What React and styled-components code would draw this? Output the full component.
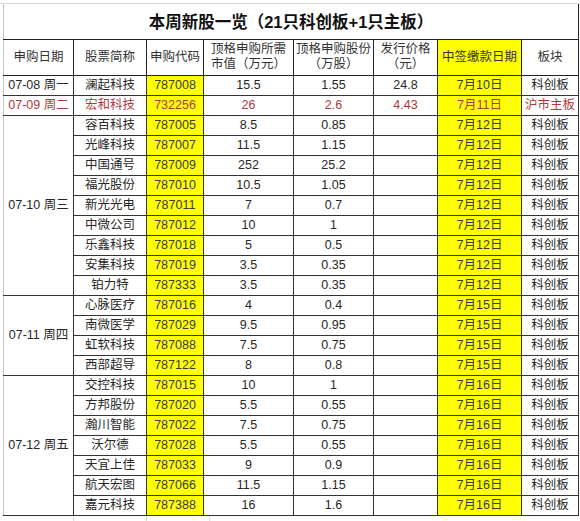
import React from 'react';
import styled, { createGlobalStyle } from 'styled-components';

const GlobalStyle = createGlobalStyle`
  html, body {
    margin: 0;
    padding: 0;
    background: #fff;
  }
  body {
    font-family: "Liberation Sans", "Noto Sans CJK SC", sans-serif;
    color: #262626;
  }
`;

const columns = [70, 73, 57, 90, 80, 64, 84, 57];

const groups = [
  {
    date: '07-08 周一',
    rows: [['澜起科技', '787008', '15.5', '1.55', '24.8', '7月10日', '科创板']],
  },
  {
    date: '07-09 周二',
    red: true,
    rows: [['宏和科技', '732256', '26', '2.6', '4.43', '7月11日', '沪市主板']],
  },
  {
    date: '07-10 周三',
    rows: [
      ['容百科技', '787005', '8.5', '0.85', '', '7月12日', '科创板'],
      ['光峰科技', '787007', '11.5', '1.15', '', '7月12日', '科创板'],
      ['中国通号', '787009', '252', '25.2', '', '7月12日', '科创板'],
      ['福光股份', '787010', '10.5', '1.05', '', '7月12日', '科创板'],
      ['新光光电', '787011', '7', '0.7', '', '7月12日', '科创板'],
      ['中微公司', '787012', '10', '1', '', '7月12日', '科创板'],
      ['乐鑫科技', '787018', '5', '0.5', '', '7月12日', '科创板'],
      ['安集科技', '787019', '3.5', '0.35', '', '7月12日', '科创板'],
      ['铂力特', '787333', '3.5', '0.35', '', '7月12日', '科创板'],
    ],
  },
  {
    date: '07-11 周四',
    rows: [
      ['心脉医疗', '787016', '4', '0.4', '', '7月15日', '科创板'],
      ['南微医学', '787029', '9.5', '0.95', '', '7月15日', '科创板'],
      ['虹软科技', '787088', '7.5', '0.75', '', '7月15日', '科创板'],
      ['西部超导', '787122', '8', '0.8', '', '7月15日', '科创板'],
    ],
  },
  {
    date: '07-12 周五',
    rows: [
      ['交控科技', '787015', '10', '1', '', '7月16日', '科创板'],
      ['方邦股份', '787020', '5.5', '0.55', '', '7月16日', '科创板'],
      ['瀚川智能', '787022', '7.5', '0.75', '', '7月16日', '科创板'],
      ['沃尔德', '787028', '5.5', '0.55', '', '7月16日', '科创板'],
      ['天宜上佳', '787033', '9', '0.9', '', '7月16日', '科创板'],
      ['航天宏图', '787066', '11.5', '1.15', '', '7月16日', '科创板'],
      ['嘉元科技', '787388', '16', '1.6', '', '7月16日', '科创板'],
    ],
  },
];

// yellow columns: 申购代码(1), 中签缴款日期(5)
const yellowCols = [1, 5];

const Sheet = () => (
  <Page>
    <GlobalStyle />
    <Table>
      <colgroup>
        {columns.map((w, i) => (
          <col key={i} style={{ width: w }} />
        ))}
      </colgroup>
      <tbody>
        <TitleRow>
          <TitleCell colSpan={8}>本周新股一览（21只科创板+1只主板）</TitleCell>
        </TitleRow>
        <HeadRow>
          <HeadCell>申购日期</HeadCell>
          <HeadCell>股票简称</HeadCell>
          <HeadCell>申购代码</HeadCell>
          <HeadCell>
            顶格申购所需
            <br />
            市值（万元）
          </HeadCell>
          <HeadCell>
            顶格申购股份
            <br />
            （万股）
          </HeadCell>
          <HeadCell>
            发行价格
            <br />
            （元）
          </HeadCell>
          <HeadCell $yellow>中签缴款日期</HeadCell>
          <HeadCell>板块</HeadCell>
        </HeadRow>
        {groups.map((g) =>
          g.rows.map((row, ri) => (
            <Row key={row[1]}>
              {ri === 0 && (
                <DateCell rowSpan={g.rows.length} $red={g.red}>
                  {g.date}
                </DateCell>
              )}
              {row.map((v, ci) => (
                <Cell key={ci} $yellow={yellowCols.includes(ci)} $red={g.red}>
                  {v}
                </Cell>
              ))}
            </Row>
          ))
        )}
      </tbody>
    </Table>
    <Tail />
  </Page>
);

const Page = styled.div`
  width: 580px;
  height: 521px;
  padding: 4px 0 0 3px;
  box-sizing: border-box;
  overflow: hidden;
  background-image: linear-gradient(#dcdcdc, #dcdcdc);
  background-size: 100% 1px;
  background-position: 0 3px;
  background-repeat: no-repeat;
`;

const Table = styled.table`
  border-collapse: collapse;
  table-layout: fixed;
  width: 575px;
  font-size: 12.5px;
`;

const TitleRow = styled.tr`
  height: 35px;
`;

const TitleCell = styled.td`
  border-left: 1px solid #c8c8c8;
  border-right: 1px solid #222;
  border-bottom: 1px solid #222;
  text-align: center;
  vertical-align: middle;
  font-size: 16.5px;
  font-weight: bold;
  color: #111;
  padding: 0 0 1px 0;
`;

const HeadRow = styled.tr`
  height: 36px;
`;

const HeadCell = styled.td`
  border: 1px solid #222;
  text-align: center;
  vertical-align: middle;
  line-height: 15px;
  font-size: 12.5px;
  color: #333;
  padding: 0;
  white-space: nowrap;
  background: ${(p) => (p.$yellow ? '#ffff00' : '#fff')};
  &:first-child {
    border-left-color: #c8c8c8;
  }
`;

const Row = styled.tr`
  height: 20px;
`;

const Cell = styled.td`
  border: 1px solid #333;
  text-align: center;
  vertical-align: middle;
  padding: 0;
  line-height: 18px;
  white-space: nowrap;
  overflow: hidden;
  color: ${(p) => (p.$red ? '#b0383c' : p.$yellow ? '#3a3a3a' : '#262626')};
  background: ${(p) => (p.$yellow ? '#ffff00' : '#fff')};
`;

const DateCell = styled(Cell)`
  border-left-color: #c8c8c8;
`;

const Tail = styled.div`
  height: 6px;
  margin-left: 70px;
  width: 135px;
  border-left: 1px solid #dcdcdc;
  border-right: 1px solid #dcdcdc;
  position: relative;
  &::after {
    content: '';
    position: absolute;
    left: 72px;
    top: 0;
    height: 6px;
    border-left: 1px solid #dcdcdc;
  }
`;

export default function App() {
  return <Sheet />;
}
